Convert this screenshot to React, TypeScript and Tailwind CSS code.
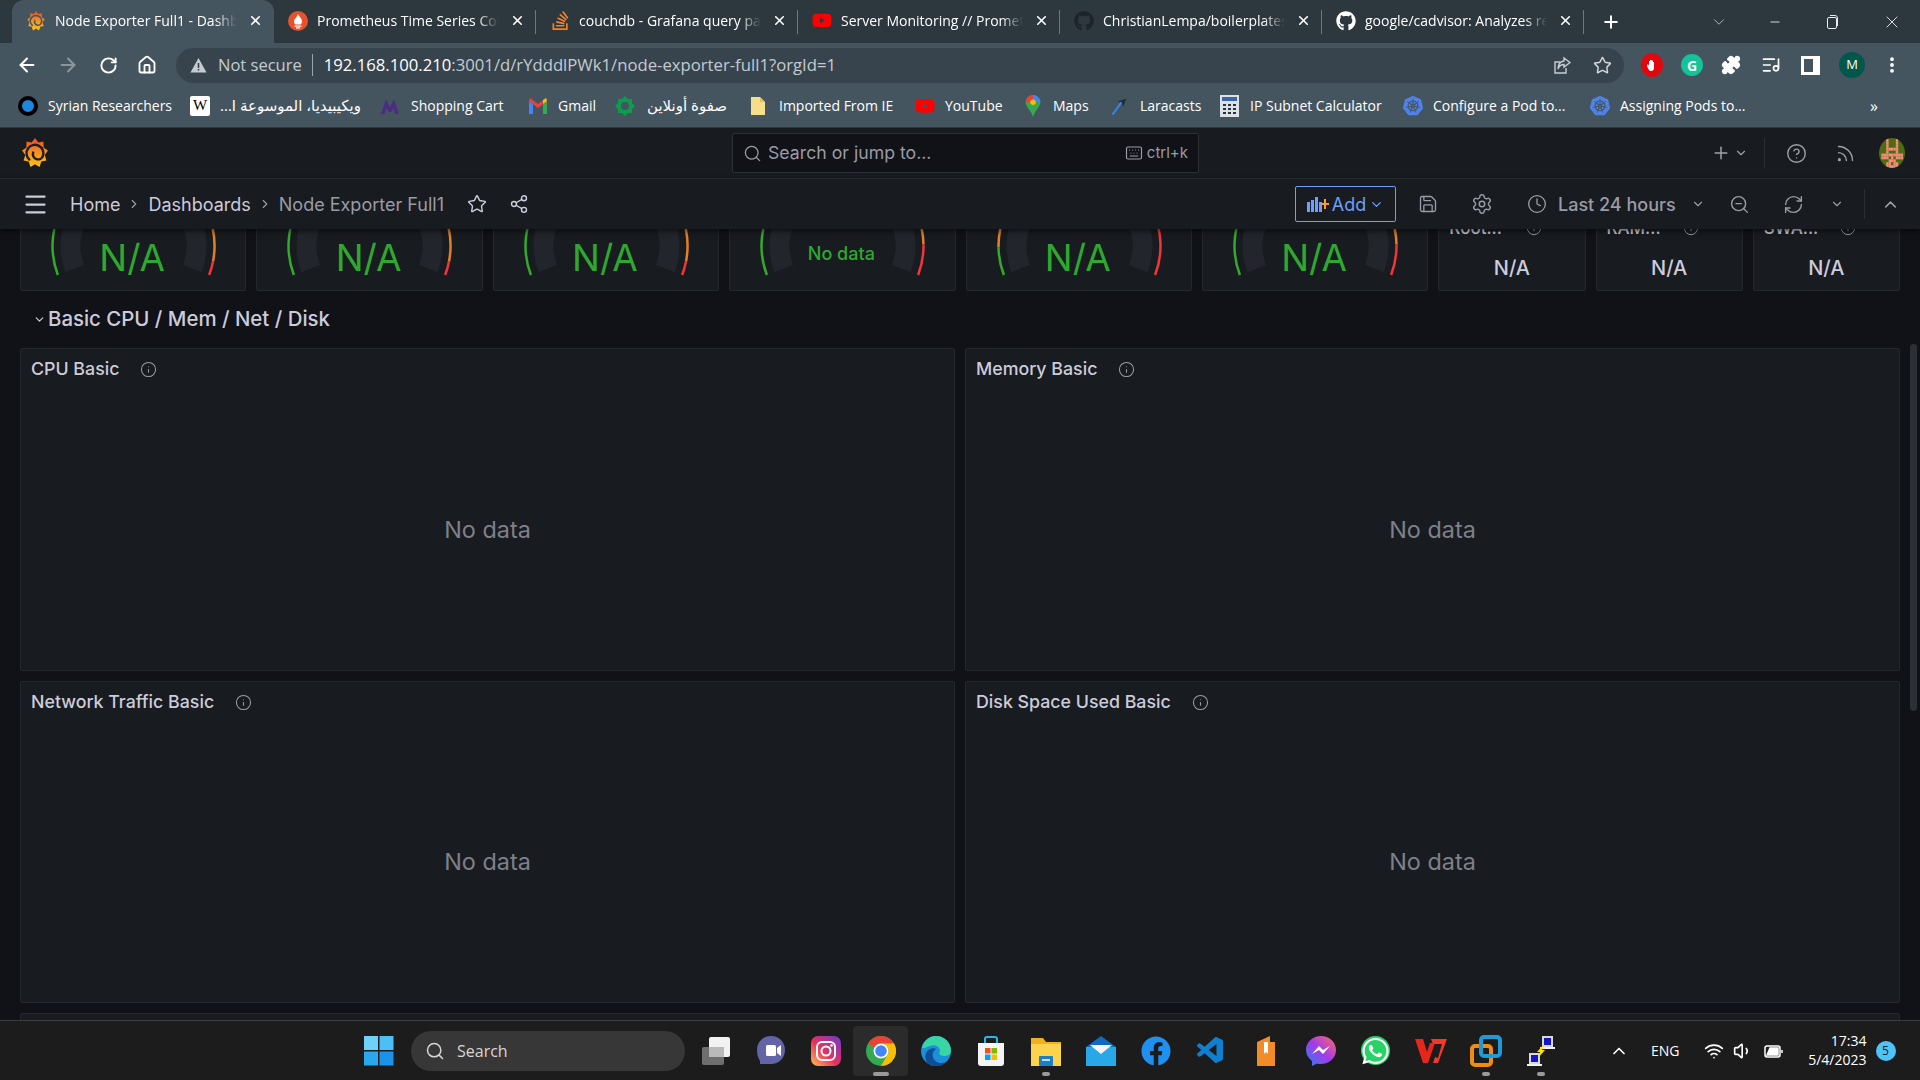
import {
  ArrowLeft, ArrowRight, RotateCw, Home, Star, Puzzle, ListMusic, EllipsisVertical, Search, Keyboard, Plus,
  ChevronDown, ChevronRight, ChevronUp, CircleHelp, Rss, Menu, Share2, Save, Settings, Clock, ZoomOut, RefreshCw, Info, X, Minus, Wifi, Volume1,
} from "lucide-react"
import { FaGithub, FaFacebook, FaWhatsapp, FaYoutube } from "react-icons/fa"
import { SiStackoverflow, SiKubernetes } from "react-icons/si"
import { VscVscode } from "react-icons/vsc"

const chrome = "font-['Open_Sans','DejaVu_Sans',sans-serif]"

function GrafanaLogo({ id, size, ink }: { id: string; size: number; ink: string }) {
  const pts: string[] = []
  for (let i = 0; i < 18; i++) {
    const a = (i / 18) * Math.PI * 2 - Math.PI / 2
    const r = i % 2 === 0 ? 16 : 12
    pts.push(`${16 + r * Math.cos(a) * 0.88},${16 + r * Math.sin(a)}`)
  }
  return (
    <svg width={size} height={size} viewBox="0 0 32 32">
      <defs>
        <linearGradient id={id} x1="0" y1="0" x2="0" y2="1">
          <stop offset="0" stopColor="#ee4a2a" />
          <stop offset="0.45" stopColor="#f58a1f" />
          <stop offset="1" stopColor="#fcc419" />
        </linearGradient>
      </defs>
      <polygon points={pts.join(" ")} fill={`url(#${id})`} />
      <path d="M10 23A9 9 0 1 1 24.5 19A5.5 5.5 0 1 1 14 15.5" fill="none" stroke={ink} strokeWidth="2.6" strokeLinecap="round" />
    </svg>
  )
}

function Prometheus() {
  return (
    <svg width="20" height="20" viewBox="0 0 20 20">
      <circle cx="10" cy="10" r="10" fill="#e6522c" />
      <path d="M10 3c1 3 4 4 4 7.5 0 1.5-1 2.5-1.5 3h-5C7 13 6 12 6 10.5 6 8 9 6.5 10 3z" fill="#fff" />
      <rect x="6.5" y="14.5" width="7" height="1.2" fill="#fff" />
      <rect x="8" y="16.3" width="4" height="1.2" fill="#fff" />
    </svg>
  )
}

const tabs = [
  { title: "Node Exporter Full1 - Dashboard", icon: <GrafanaLogo id="tabLogo" size={22} ink="#45555f" /> },
  { title: "Prometheus Time Series Collection", icon: <Prometheus /> },
  { title: "couchdb - Grafana query panel", icon: <SiStackoverflow size={19} className="text-[#f48024]" /> },
  { title: "Server Monitoring // Prometheus", icon: <FaYoutube size={21} className="text-[#ff0000]" /> },
  { title: "ChristianLempa/boilerplates", icon: <FaGithub size={20} className="text-[#1c2329]" /> },
  { title: "google/cadvisor: Analyzes resource", icon: <FaGithub size={20} className="text-white" /> },
]

function TabStrip() {
  return (
    <div className={`flex h-[43px] items-stretch bg-[#2c373e] pl-[12px] text-[14px] text-white ${chrome}`}>
      {tabs.map((tab, i) => (
        <div
          key={tab.title}
          className={`relative flex w-[262px] items-center pb-[2px] pl-[14px] pr-[11px] ${i === 0 ? "rounded-t-[12px] bg-[#45555f]" : ""}`}
        >
          <span className="flex w-[20px] shrink-0 items-center justify-center">{tab.icon}</span>
          <span className="ml-[9px] flex-1 overflow-hidden whitespace-nowrap [mask-image:linear-gradient(to_right,black_88%,transparent)]">
            {tab.title}
          </span>
          <X size={15} strokeWidth={2.6} className="ml-[11px] shrink-0" />
          {i > 0 && <span className="absolute right-0 top-[10px] h-[24px] w-px bg-[#6c7880]" />}
        </div>
      ))}
      <div className="flex w-[54px] items-center justify-center">
        <Plus size={20} strokeWidth={2.4} />
      </div>
      <div className="flex flex-1 items-center justify-end pr-[18px]">
        <ChevronDown size={18} strokeWidth={1} className="mr-[40px] text-[#d5dadd]" />
        <Minus size={14} strokeWidth={1.4} className="mr-[44px]" />
        <svg width="14" height="16" viewBox="0 0 14 16" className="mr-[42px]" fill="none" stroke="#e8eaec">
          <rect x="1.5" y="3.5" width="9" height="11" rx="1.5" />
          <path d="M4 1.5h5a2.5 2.5 0 0 1 2.5 2.5v8" />
        </svg>
        <X size={20} strokeWidth={1} />
      </div>
    </div>
  )
}

function AddressBar() {
  return (
    <div className={`flex h-[44px] items-center bg-[#45555f] text-white ${chrome}`}>
      <div className="flex w-[176px] items-center pl-[16px]">
        <ArrowLeft size={22} strokeWidth={2.2} />
        <ArrowRight size={22} strokeWidth={2.2} className="ml-[19px] text-[#8a969e]" />
        <RotateCw size={19} strokeWidth={2.4} className="ml-[20px]" />
        <Home size={20} strokeWidth={2.2} className="ml-[19px]" />
      </div>
      <div className="flex h-[35px] w-[1448px] items-center rounded-full bg-[#37444d] pl-[14px] pr-[12px]">
        <svg width="17" height="16" viewBox="0 0 17 16">
          <path d="M8.5 1 16.5 15.5H.5z" fill="#c5ccd1" />
          <path d="M7.7 6h1.6v5H7.7zM7.7 12h1.6v1.6H7.7z" fill="#37444d" />
        </svg>
        <span className="ml-[11px] text-[16.5px] text-[#c5ccd1]">Not secure</span>
        <span className="ml-[10px] mr-[11px] h-[22px] w-px bg-[#9aa5ac]" />
        <span className="text-[16.7px] text-[#c3cbd0]">
          <span className="text-white">192.168.100.210</span>:3001/d/rYdddlPWk1/node-exporter-full1?orgId=1
        </span>
        <svg width="19" height="19" viewBox="0 0 19 19" className="ml-auto mr-[21px]" fill="none" stroke="#c5ccd1" strokeWidth="1.4">
          <path d="M13 12v5H2V6h5" />
          <path d="M11 2l6 4.5-6 4.5V8.5C8 8.5 6 10 5 13c0-5 2-7.5 6-8z" />
        </svg>
        <Star size={19} strokeWidth={1.8} className="text-[#d5dadd]" />
      </div>
      <div className="flex flex-1 items-center pl-[17px]">
        <svg width="22" height="24" viewBox="0 0 22 24">
          <ellipse cx="11" cy="12" rx="11" ry="12" fill="#e2070c" />
          <path d="M8 17c-1-2-2-3-2-5 1-1 2 0 2 1V8h1v4-5h1.5v5-4.5H12V12V9h1v6c0 1.5-1 3-2.5 3S8.5 17.5 8 17z" fill="#fff" />
        </svg>
        <span className="ml-[18px] flex h-[22px] w-[22px] items-center justify-center rounded-full bg-[#15c39a] text-[14px] font-bold">G</span>
        <Puzzle size={20} fill="#fff" className="ml-[18px]" />
        <ListMusic size={20} strokeWidth={2} className="ml-[20px]" />
        <span className="ml-[20px] h-[19px] w-[19px] border-[3px] border-r-[7px] border-white" />
        <span className="ml-[19px] flex h-[26px] w-[26px] items-center justify-center rounded-full bg-[#00574b] text-[13px]">M</span>
        <EllipsisVertical size={20} strokeWidth={2.6} className="ml-[17px]" />
      </div>
    </div>
  )
}

const bookmarks = [
  { label: "Syrian Researchers", width: "w-[172px]", gap: "gap-[10px]", icon: <span className="h-[20px] w-[20px] rounded-full border-[4px] border-black bg-[#1d86e0]" /> },
  { label: "ويكيبيديا، الموسوعة ا...", rtl: true, width: "w-[190px]", gap: "gap-[10px]", icon: <span className="flex h-[20px] w-[20px] items-center justify-center rounded-[2px] bg-white font-['Liberation_Serif',serif] text-[15px] text-black">W</span> },
  { label: "Shopping Cart", width: "w-[148px]", gap: "gap-[11px]", icon: <svg width="20" height="20" viewBox="0 0 20 20"><path d="M1 18 6 3l4 8 4-8 5 15h-4l-1-6-3 4h-2l-3-4-1 6z" fill="#4b2d83" /></svg> },
  { label: "Gmail", width: "w-[87px]", gap: "gap-[10px]", icon: <svg width="20" height="16" viewBox="0 0 20 16"><path d="M1 16V3l4 3v10z" fill="#4285f4" /><path d="M19 16V3l-4 3v10z" fill="#34a853" /><path d="M1 3l9 7 9-7-1-3-8 6-8-6z" fill="#ea4335" /><path d="M15 6l4-3-1-3-3 2z" fill="#fbbc04" /></svg> },
  { label: "صفوة أونلاين", rtl: true, width: "w-[133px]", gap: "gap-[12px]", icon: <svg width="20" height="20" viewBox="0 0 20 20"><path d="M10 0l3 3 4 0 0 4 3 3-3 3 0 4-4 0-3 3-3-3-4 0 0-4-3-3 3-3 0-4 4 0z" fill="#0d9b4c" /><circle cx="10" cy="10" r="4" fill="#45555f" /></svg> },
  { label: "Imported From IE", width: "w-[167px]", gap: "gap-[11px]", icon: <svg width="18" height="20" viewBox="0 0 18 20"><path d="M2 1h9l5 5v13H2z" fill="#f6de8a" /><path d="M11 1l5 5h-5z" fill="#e2bf54" /></svg> },
  { label: "YouTube", width: "w-[108px]", gap: "gap-[10px]", icon: <FaYoutube size={20} className="text-[#ff0000]" /> },
  { label: "Maps", width: "w-[85px]", gap: "gap-[10px]", icon: <svg width="20" height="22" viewBox="0 0 20 24"><path d="M10 0a8 8 0 0 1 8 8c0 5-6 9-8 16C8 17 2 13 2 8a8 8 0 0 1 8-8z" fill="#34a853" /><path d="M10 0a8 8 0 0 1 8 8l-8 0z" fill="#4285f4" /><path d="M2 8a8 8 0 0 1 8-8l0 8z" fill="#ea4335" /><circle cx="10" cy="8" r="3" fill="#fbbc04" /></svg> },
  { label: "Laracasts", width: "w-[111px]", gap: "gap-[12px]", icon: <svg width="22" height="22" viewBox="0 0 22 22"><path d="M4 20 14 6l2 1L6 21z" fill="#328af1" /><path d="M10 6l10-3-3 9-2-5z" fill="#20303a" /></svg> },
  { label: "IP Subnet Calculator", width: "w-[184px]", gap: "gap-[11px]", icon: <svg width="19" height="22" viewBox="0 0 19 22"><rect width="19" height="22" fill="#dbe1e6" /><rect x="2" y="2" width="15" height="4" fill="#3a66a8" /><path d="M3 9h3v2H3zM8 9h3v2H8zM13 9h3v2h-3zM3 13h3v2H3zM8 13h3v2H8zM13 13h3v2h-3zM3 17h3v2H3zM8 17h3v2H8zM13 17h3v2h-3z" fill="#29333a" /></svg> },
  { label: "Configure a Pod to...", width: "w-[187px]", gap: "gap-[10px]", icon: <SiKubernetes size={21} className="text-[#4f83e8]" /> },
  { label: "Assigning Pods to...", width: "w-[280px]", gap: "gap-[10px]", icon: <SiKubernetes size={21} className="text-[#4f83e8]" /> },
]

function BookmarksBar() {
  return (
    <div className={`flex h-[41px] items-center border-b border-[#2c373e] bg-[#45555f] pb-[3px] pl-[18px] text-[14px] text-white ${chrome}`}>
      {bookmarks.map((b) => (
        <div key={b.label} className={`flex items-center whitespace-nowrap ${b.width} ${b.gap}`}>
          <span className="flex w-[20px] shrink-0 items-center justify-center">{b.icon}</span>
          {b.rtl ? <span dir="rtl" className="text-[15px]">{b.label}</span> : <span>{b.label}</span>}
        </div>
      ))}
      <span className="text-[16px]">»</span>
    </div>
  )
}

const avatarRows = [
  "...#...#...",
  "...#...#...",
  "...#...#...",
  "...#####...",
  "...#...#...",
  ".#########.",
  ".###.#.###.",
  "....###....",
  "...##.##...",
  "...#####...",
]

function GrafanaTop() {
  return (
    <div className="relative z-10 flex h-[51px] items-center border-b border-[#2b2e34] bg-[#181b1f] pl-[20px] text-[#ccccdc]">
      <GrafanaLogo id="topLogo" size={30} ink="#1c2026" />
      <div className="ml-[682px] flex h-[40px] w-[467px] items-center rounded-[2px] border border-[#2c2f35] bg-[#111217] pl-[10px] pr-[10px] text-[#9a9ba6]">
        <Search size={19} strokeWidth={1.6} />
        <span className="ml-[6px] pt-[1px] text-[17.7px]">Search or jump to...</span>
        <Keyboard size={18} strokeWidth={1.6} className="ml-auto" />
        <span className="ml-[4px] text-[15px]">ctrl+k</span>
      </div>
      <Plus size={20} strokeWidth={1.8} className="ml-[512px] text-[#a0a1ab]" />
      <ChevronDown size={14} className="ml-[3px] text-[#a0a1ab]" />
      <span className="ml-[16px] h-[30px] w-px bg-[#2b2e34]" />
      <CircleHelp size={21} strokeWidth={1.6} className="ml-[21px] text-[#a0a1ab]" />
      <Rss size={21} strokeWidth={1.6} className="ml-[28px] text-[#a0a1ab]" />
      <svg width="26" height="30" viewBox="0 0 26 30" className="ml-[23px]">
        <defs>
          <clipPath id="avatarClip">
            <ellipse cx="13" cy="15" rx="13" ry="15" />
          </clipPath>
        </defs>
        <g clipPath="url(#avatarClip)">
          <rect width="26" height="30" fill="#4e6b10" />
          {avatarRows.map((row, y) =>
            row.split("").map((c, x) =>
              c === "#" ? <rect key={`${x}-${y}`} x={x * 2.4} y={y * 2.9 + 1} width="2.4" height="2.9" fill="#f48c7c" /> : null,
            ),
          )}
        </g>
      </svg>
    </div>
  )
}

function GrafanaToolbar() {
  return (
    <div className="relative z-10 flex h-[50px] items-center bg-[#181b1f] pl-[22px] text-[18px] text-[#ccccdc] shadow-[0_2px_6px_rgba(0,0,0,0.6)]">
      <Menu size={27} strokeWidth={2} />
      <span className="ml-[21px]">Home</span>
      <ChevronRight size={14} className="mx-[7px] text-[#9a9ba6]" />
      <span>Dashboards</span>
      <ChevronRight size={14} className="mx-[7px] text-[#9a9ba6]" />
      <span className="text-[#9a9ba6]">Node Exporter Full1</span>
      <Star size={20} strokeWidth={1.7} className="ml-[23px]" />
      <Share2 size={20} strokeWidth={1.7} className="ml-[22px]" />
      <div className="ml-[766px] flex h-[36px] w-[101px] items-center justify-center rounded-[2px] border border-[#6e9fff] text-[#6e9fff]">
        <svg width="22" height="16" viewBox="0 0 22 16">
          <path d="M0 6h3v10H0zM4 4h3v12H4zM8 1h3v15H8zM12 6h3v10h-3z" fill="#6e9fff" />
          <path d="M17 3h2v4h3v2h-3v4h-2V9h-3V7h3z" fill="#ff9830" />
        </svg>
        <span className="ml-[3px] text-[18px]">Add</span>
        <ChevronDown size={15} className="ml-[3px]" />
      </div>
      <Save size={20} strokeWidth={1.6} className="ml-[22px] text-[#9a9ba6]" />
      <Settings size={22} strokeWidth={1.6} className="ml-[33px] text-[#9a9ba6]" />
      <Clock size={20} strokeWidth={1.6} className="ml-[34px] text-[#9a9ba6]" />
      <span className="ml-[11px] text-[18px] font-medium text-[#9a9ba6]">Last 24 hours</span>
      <ChevronDown size={14} className="ml-[15px] text-[#9a9ba6]" />
      <ZoomOut size={21} strokeWidth={1.6} className="ml-[24px] text-[#9a9ba6]" />
      <RefreshCw size={21} strokeWidth={1.6} className="ml-[33px] text-[#9a9ba6]" />
      <ChevronDown size={14} className="ml-[26px] text-[#9a9ba6]" />
      <span className="ml-[20px] h-[30px] w-px bg-[#2b2e34]" />
      <ChevronUp size={19} strokeWidth={2} className="ml-[16px] text-[#9a9ba6]" />
    </div>
  )
}

const polar = (r: number, deg: number) => {
  const a = (deg * Math.PI) / 180
  return `${112.5 + r * Math.cos(a)} ${54 + r * Math.sin(a)}`
}

// clockwise arc between two angles, 0deg = pointing right
const arc = (r: number, from: number, to: number) => `M${polar(r, from)}A${r} ${r} 0 0 1 ${polar(r, to)}`

function Gauge({ title, left, right }: { title: string; left: string; right: string }) {
  return (
    <div className="relative flex h-[100px] w-[226.4px] shrink-0 items-center justify-center rounded-[2px] border border-[#24272d] bg-[#181b1f] pr-[2px] pt-[34px]">
      <svg width="225" height="100" viewBox="0 0 225 100" className="absolute left-0 top-0" fill="none">
        <path d={arc(63, 159, 205)} stroke="#22252b" strokeWidth="20" />
        <path d={arc(63, -25, 21)} stroke="#22252b" strokeWidth="20" />
        {left === "orange" ? (
          <>
            <path d={arc(81, 159, 179)} stroke="#37a82e" strokeWidth="2.5" />
            <path d={arc(81, 179, 205)} stroke="#e0802a" strokeWidth="2.5" />
          </>
        ) : (
          <path d={arc(81, 159, 205)} stroke="#37a82e" strokeWidth="2.5" />
        )}
        {right === "low" && (
          <>
            <path d={arc(81, -25, 11)} stroke="#e0802a" strokeWidth="2.5" />
            <path d={arc(81, 11, 21)} stroke="#f2353a" strokeWidth="2.5" />
          </>
        )}
        {right === "mid" && (
          <>
            <path d={arc(81, -25, -1)} stroke="#e0802a" strokeWidth="2.5" />
            <path d={arc(81, -1, 21)} stroke="#f2353a" strokeWidth="2.5" />
          </>
        )}
        {right === "red" && <path d={arc(81, -25, 21)} stroke="#f2353a" strokeWidth="2.5" />}
      </svg>
      <span className={`relative text-[#2fa82f] ${title === "No data" ? "-mt-[9px] text-[18px] font-medium" : "text-[37px]"}`}>{title}</span>
    </div>
  )
}

function Stat({ title, width }: { title: string; width: string }) {
  return (
    <div className={`flex h-[100px] shrink-0 flex-col rounded-[2px] border border-[#24272d] bg-[#181b1f] px-[10px] ${width}`}>
      <div className="mt-[26px] flex items-center justify-between pr-[33px] text-[17px] font-medium leading-[20px] text-[#ccccdc]">
        <span>{title}</span>
        <Info size={16} strokeWidth={1.5} className="text-[#9a9ba6]" />
      </div>
      <div className="mt-[15px] text-center text-[20px] font-medium text-[#ccccdc]">N/A</div>
    </div>
  )
}

function Panel({ title }: { title: string }) {
  return (
    <div className="flex min-w-0 flex-1 flex-col rounded-[2px] border border-[#24272d] bg-[#181b1f]">
      <div className="flex h-[40px] items-center pl-[10px] pt-[1px] text-[17.8px] font-medium text-[#ccccdc]">
        <span>{title}</span>
        <Info size={17} strokeWidth={1.5} className="ml-[21px] text-[#9a9ba6]" />
      </div>
      <div className="flex flex-1 items-center justify-center text-[23.4px] text-[#7f808a]">No data</div>
    </div>
  )
}

function Dashboard() {
  return (
    <div className="relative flex-1 overflow-hidden bg-[#111217] pl-[20px] pr-[20px]">
      <div className="-mt-[38px] flex gap-[10px]">
        <Gauge title="N/A" left="green" right="low" />
        <Gauge title="N/A" left="green" right="low" />
        <Gauge title="N/A" left="green" right="low" />
        <Gauge title="No data" left="green" right="mid" />
        <Gauge title="N/A" left="orange" right="red" />
        <Gauge title="N/A" left="green" right="mid" />
        <Stat title="Root..." width="w-[147.2px]" />
        <Stat title="RAM..." width="w-[147.2px]" />
        <Stat title="SWA..." width="w-[147.2px]" />
      </div>
      <div className="flex h-[57px] items-center pl-[13px] text-[20.4px] font-medium text-[#ccccdc]">
        <ChevronDown size={13} strokeWidth={2.2} className="mr-[2px]" />
        Basic CPU / Mem / Net / Disk
      </div>
      <div className="flex h-[323px] gap-[10px]">
        <Panel title="CPU Basic" />
        <Panel title="Memory Basic" />
      </div>
      <div className="mt-[10px] flex h-[322px] gap-[10px]">
        <Panel title="Network Traffic Basic" />
        <Panel title="Disk Space Used Basic" />
      </div>
      <div className="mt-[10px] h-[40px] rounded-[2px] border border-[#24272d] bg-[#181b1f]" />
      <div className="absolute right-[3px] top-[115px] h-[367px] w-[7px] rounded-full bg-[#2c2f35]" />
    </div>
  )
}

const taskIcons: { key: string; dot?: string; active?: boolean; icon: React.ReactNode }[] = [
  {
    key: "view",
    icon: (
      <svg width="30" height="30" viewBox="0 0 30 30">
        <rect x="1" y="11" width="22" height="18" rx="2" fill="#6e6e6e" />
        <rect x="8" y="1" width="21" height="20" rx="2" fill="#f2f2f2" />
        <rect x="8" y="11" width="15" height="10" fill="#b9b9b9" />
      </svg>
    ),
  },
  {
    key: "meet",
    icon: (
      <svg width="30" height="30" viewBox="0 0 30 30">
        <path d="M15 0c8 0 14 6 14 14s-6 14-14 14H4v-3C2 22 1 18 1 14 1 6 7 0 15 0z" fill="#6264a7" />
        <rect x="10" y="9" width="10" height="11" rx="1.5" fill="#fff" />
        <path d="M21 12l4-3v11l-4-3z" fill="#fff" />
      </svg>
    ),
  },
  {
    key: "instagram",
    icon: (
      <svg width="30" height="30" viewBox="0 0 30 30">
        <defs>
          <linearGradient id="insta" x1="0" y1="1" x2="1" y2="0">
            <stop offset="0" stopColor="#fdc44f" />
            <stop offset="0.45" stopColor="#e8305f" />
            <stop offset="1" stopColor="#6b3bd1" />
          </linearGradient>
        </defs>
        <rect width="30" height="30" rx="7" fill="url(#insta)" />
        <rect x="6" y="6" width="18" height="18" rx="5" fill="none" stroke="#fff" strokeWidth="2" />
        <circle cx="15" cy="15" r="4.5" fill="none" stroke="#fff" strokeWidth="2" />
        <circle cx="20.5" cy="9.5" r="1.3" fill="#fff" />
      </svg>
    ),
  },
  {
    key: "chrome",
    dot: "wide",
    active: true,
    icon: (
      <svg width="30" height="30" viewBox="0 0 30 30">
        <circle cx="15" cy="15" r="15" fill="#34a853" />
        <path d="M15 0a15 15 0 0 1 13 7.5H15a7.5 7.5 0 0 0-6.5 3.75L2 7.5A15 15 0 0 1 15 0z" fill="#ea4335" />
        <path d="M28 7.5A15 15 0 0 1 15 30l6.5-11.25A7.5 7.5 0 0 0 15 7.5z" fill="#fbbc04" />
        <circle cx="15" cy="15" r="7.5" fill="#fff" />
        <circle cx="15" cy="15" r="5.8" fill="#4285f4" />
      </svg>
    ),
  },
  {
    key: "edge",
    icon: (
      <svg width="30" height="30" viewBox="0 0 30 30">
        <circle cx="15" cy="15" r="15" fill="#1b8fd8" />
        <path d="M1 12C3 4 9 0 15 0c9 0 15 7 15 15 0 3-3 5-7 5-5 0-5-3-4-6-1-4-6-6-10-4-4 1-7 3-8 2z" fill="#38d6a5" />
        <path d="M11 30c-5-2-8-7-6-13 2-4 7-6 10-4-3 2-4 5-3 8 1 4 6 8 13 5-4 4-9 6-14 4z" fill="#0d4f96" />
      </svg>
    ),
  },
  {
    key: "store",
    icon: (
      <svg width="30" height="30" viewBox="0 0 30 30">
        <path d="M9 7V3a2 2 0 0 1 2-2h8a2 2 0 0 1 2 2v4" fill="none" stroke="#29b6e8" strokeWidth="2" />
        <path d="M2 7h26v20a3 3 0 0 1-3 3H5a3 3 0 0 1-3-3z" fill="#f4f4f4" />
        <rect x="9" y="12" width="5.5" height="5.5" fill="#f25022" />
        <rect x="15.5" y="12" width="5.5" height="5.5" fill="#7fba00" />
        <rect x="9" y="18.5" width="5.5" height="5.5" fill="#00a4ef" />
        <rect x="15.5" y="18.5" width="5.5" height="5.5" fill="#ffb900" />
      </svg>
    ),
  },
  {
    key: "files",
    dot: "small",
    icon: (
      <svg width="32" height="30" viewBox="0 0 32 30">
        <path d="M1 2h12l3 4h15v24H1z" fill="#f2b01e" />
        <path d="M1 8h30v22H1z" fill="#fcd34d" />
        <rect x="9" y="20" width="14" height="10" rx="1" fill="#1d7fc4" />
        <rect x="12" y="23" width="8" height="2" fill="#bde3fb" />
      </svg>
    ),
  },
  {
    key: "mail",
    icon: (
      <svg width="30" height="30" viewBox="0 0 30 30">
        <path d="M0 11 15 0l15 11v19H0z" fill="#0f6cbd" />
        <path d="M0 11h30v19H0z" fill="#29a8e8" />
        <path d="M4 9h22l-11 9z" fill="#f5f5f5" />
      </svg>
    ),
  },
  { key: "facebook", icon: <FaFacebook size={30} className="text-[#1e90f0]" /> },
  { key: "vscode", icon: <VscVscode size={32} className="text-[#0f7fd0]" /> },
  {
    key: "books",
    icon: (
      <svg width="20" height="30" viewBox="0 0 20 30">
        <path d="M1 6 14 0v6h5v24H1z" fill="#f28c28" />
        <path d="M8 6h4v12l-2-2-2 2z" fill="#fff" />
      </svg>
    ),
  },
  {
    key: "messenger",
    icon: (
      <svg width="30" height="30" viewBox="0 0 30 30">
        <defs>
          <linearGradient id="msgr" x1="0" y1="1" x2="1" y2="0">
            <stop offset="0" stopColor="#2f7bf5" />
            <stop offset="0.5" stopColor="#a33ce8" />
            <stop offset="1" stopColor="#ff6a68" />
          </linearGradient>
        </defs>
        <path d="M15 0c8 0 15 6 15 14s-7 14-15 14c-1.5 0-3-.2-4-.6L6 30v-5C2 22 0 18 0 14 0 6 7 0 15 0z" fill="url(#msgr)" />
        <path d="M6 18l7-8 4 4 7-4-7 8-4-4z" fill="#fff" />
      </svg>
    ),
  },
  {
    key: "whatsapp",
    icon: (
      <span className="flex h-[29px] w-[29px] items-center justify-center rounded-full bg-[#25d366]">
        <FaWhatsapp size={30} className="text-white" />
      </span>
    ),
  },
  {
    key: "wps",
    icon: (
      <svg width="32" height="26" viewBox="0 0 32 26">
        <path d="M0 1h8l4 13 3-9h5l-7 20H8z" fill="#e8261c" />
        <path d="M16 1h16l-9 24h-5l2-6 3 1 4-14h-9z" fill="#f4382c" />
      </svg>
    ),
  },
  {
    key: "vmware",
    dot: "small",
    icon: (
      <svg width="32" height="32" viewBox="0 0 32 32" fill="none">
        <rect x="2" y="11" width="19" height="19" rx="3" stroke="#f28c0d" strokeWidth="4" />
        <rect x="11" y="2" width="19" height="19" rx="3" stroke="#1d9bd7" strokeWidth="4" />
      </svg>
    ),
  },
  {
    key: "network",
    dot: "small",
    icon: (
      <svg width="30" height="32" viewBox="0 0 30 32">
        <rect x="16" y="1" width="11" height="11" fill="#d8d8d8" />
        <rect x="18" y="3" width="7" height="7" fill="#1414c8" />
        <rect x="3" y="18" width="11" height="11" fill="#d8d8d8" />
        <rect x="5" y="20" width="7" height="7" fill="#1414c8" />
        <rect x="1" y="29" width="15" height="2" fill="#f0f0f0" />
        <rect x="14" y="12" width="15" height="2" fill="#f0f0f0" />
        <path d="M18 9 11 17h3l-2 6 7-8h-3z" fill="#ffe600" />
      </svg>
    ),
  },
]

function Taskbar() {
  return (
    <div className={`flex h-[60px] items-center border-t border-[#3d3d3d] bg-[#1c1c1c] text-white ${chrome}`}>
      <svg width="30" height="30" viewBox="0 0 30 30" className="ml-[364px]">
        <rect width="14" height="14" fill="#6fd0f8" />
        <rect x="15.5" width="14" height="14" fill="#4cc0f5" />
        <rect y="15.5" width="14" height="14" fill="#2aa8ef" />
        <rect x="15.5" y="15.5" width="14" height="14" fill="#1a94ea" />
      </svg>
      <div className="ml-[17px] flex h-[40px] w-[274px] items-center rounded-full bg-[#373737] pl-[14px] text-[16px] text-[#d6d6d6]">
        <Search size={20} strokeWidth={1.8} />
        <span className="ml-[12px]">Search</span>
      </div>
      <div className="ml-[3px] flex">
        {taskIcons.map((t) => (
          <div
            key={t.key}
            className={`relative flex h-[50px] w-[55px] items-center justify-center rounded-[4px] ${t.active ? "bg-[#2b2b2b]" : ""}`}
          >
            {t.icon}
            {t.dot === "small" && <span className="absolute bottom-0 h-[4px] w-[8px] rounded-full bg-[#9a9a9a]" />}
            {t.dot === "wide" && <span className="absolute bottom-0 h-[4px] w-[16px] rounded-full bg-[#9a9a9a]" />}
          </div>
        ))}
      </div>
      <ChevronUp size={20} strokeWidth={2} className="ml-[41px]" />
      <span className="ml-[22px] text-[14px]">ENG</span>
      <Wifi size={20} strokeWidth={2} className="ml-[24px]" />
      <Volume1 size={20} strokeWidth={2} className="ml-[9px]" />
      <svg width="20" height="18" viewBox="0 0 20 18" className="ml-[11px]" fill="none" stroke="#fff" strokeWidth="1.5">
        <rect x="1" y="4" width="15" height="11" rx="2" />
        <path d="M18 8v3" />
        <path d="M3 13 6 6h8v7z" fill="#fff" />
      </svg>
      <div className="-mt-[2px] ml-[3px] w-[80px] text-right text-[14px] leading-[19px]">
        <div>17:34</div>
        <div>5/4/2023</div>
      </div>
      <span className="ml-[9px] flex h-[20px] w-[20px] items-center justify-center rounded-full bg-[#4fc3f7] text-[12px] text-[#10222c]">5</span>
    </div>
  )
}

export default function App() {
  return (
    <div className="flex h-[1080px] w-[1920px] flex-col overflow-hidden bg-[#111217] font-['Inter',sans-serif]">
      <TabStrip />
      <AddressBar />
      <BookmarksBar />
      <GrafanaTop />
      <GrafanaToolbar />
      <Dashboard />
      <Taskbar />
    </div>
  )
}
